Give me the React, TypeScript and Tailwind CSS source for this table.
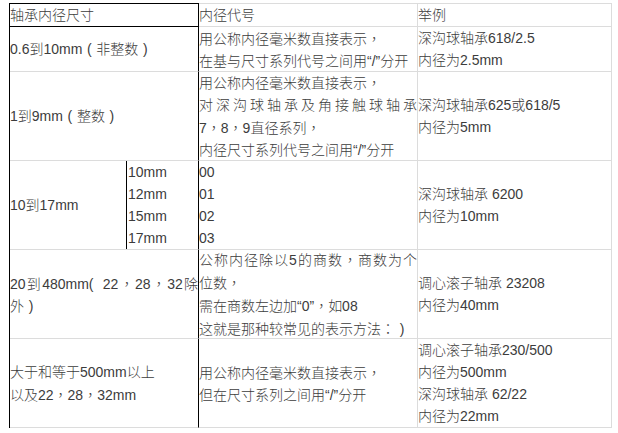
import React from "react";

const PUNCT = "，：";
const PAREN: Record<string, string> = { "（": "(", "）": ")" };

function T({ s }: { s: string }) {
  const parts: React.ReactNode[] = [];
  let buf = "";
  let k = 0;
  for (const ch of s) {
    if (PUNCT.includes(ch)) {
      if (buf) parts.push(buf);
      buf = "";
      parts.push(
        <span key={k++} className="font-['Noto_Sans_CJK_TC',sans-serif]">
          {ch}
        </span>
      );
    } else if (PAREN[ch]) {
      if (buf) parts.push(buf);
      buf = "";
      parts.push(
        <span key={k++} className="inline-block w-[14px] text-center">
          {PAREN[ch]}
        </span>
      );
    } else buf += ch;
  }
  if (buf) parts.push(buf);
  return <>{parts}</>;
}

const L = ({ s, j, nw }: { s: string; j?: boolean; nw?: boolean }) => (
  <div className={(j ? "text-justify [text-align-last:justify] " : "") + (nw ? "whitespace-nowrap" : "")}>
    <T s={s} />
  </div>
);

export default function App() {
  const c1 = "border-r border-b border-r-black border-b-[#dcdcdc] flex flex-col justify-center";
  const c2 = "border-r border-b border-[#dcdcdc] flex flex-col justify-center";
  const c3 = "border-r border-b border-[#dcdcdc] flex flex-col justify-center";
  return (
    <div className="w-[618px] h-[433px] bg-white pt-[3px] pl-[9px] text-[14px] leading-[22px] font-light text-[#3c3c3c] font-['Liberation_Sans','Noto_Sans_CJK_SC',sans-serif]">
      <div className="grid grid-cols-[189px_219px_194px] grid-rows-[24px_45px_89px_89px_89px_89px] border-l border-black">
        {/* header */}
        <div className="border border-l-0 border-black flex flex-col justify-center">轴承内径尺寸</div>
        <div className="border-t border-r border-b border-[#dcdcdc] flex flex-col justify-center">内径代号</div>
        <div className="border-t border-r border-b border-[#dcdcdc] flex flex-col justify-center">举例</div>

        {/* row 1 */}
        <div className={c1}>
          <L s="0.6到10mm（非整数）" />
        </div>
        <div className={c2}>
          <L s="用公称内径毫米数直接表示，" />
          <L s="在基与尺寸系列代号之间用“/”分开" nw />
        </div>
        <div className={c3}>
          <div>深沟球轴承618/2.5</div>
          <div>内径为2.5mm</div>
        </div>

        {/* row 2 */}
        <div className={c1}>
          <L s="1到9mm（整数）" />
        </div>
        <div className={c2}>
          <L s="用公称内径毫米数直接表示，" />
          <L s="对深沟球轴承及角接触球轴承" j />
          <L s="7，8，9直径系列，" />
          <L s="内径尺寸系列代号之间用“/”分开" nw />
        </div>
        <div className={c3}>
          <div>深沟球轴承625或618/5</div>
          <div>内径为5mm</div>
        </div>

        {/* row 3 */}
        <div className="border-r border-b border-r-black border-b-[#dcdcdc] flex">
          <div className="w-[117px] border-r border-black flex items-center">10到17mm</div>
          <div className="flex-1 flex flex-col justify-center pl-px">
            <div>10mm</div>
            <div>12mm</div>
            <div>15mm</div>
            <div>17mm</div>
          </div>
        </div>
        <div className={c2}>
          <div>00</div>
          <div>01</div>
          <div>02</div>
          <div>03</div>
        </div>
        <div className={c3}>
          <div>深沟球轴承 6200</div>
          <div>内径为10mm</div>
        </div>

        {/* row 4 */}
        <div className={c1}>
          <L s="20到480mm（22，28，32除" j />
          <L s="外）" />
        </div>
        <div className={c2}>
          <L s="公称内径除以5的商数，商数为个" j />
          <L s="位数，" />
          <L s="需在商数左边加“0”，如08" />
          <L s="这就是那种较常见的表示方法：）" />
        </div>
        <div className={c3}>
          <div>调心滚子轴承 23208</div>
          <div>内径为40mm</div>
        </div>

        {/* row 5 */}
        <div className={c1}>
          <div>大于和等于500mm以上</div>
          <L s="以及22，28，32mm" />
        </div>
        <div className={c2}>
          <L s="用公称内径毫米数直接表示，" />
          <div>但在尺寸系列之间用“/”分开</div>
        </div>
        <div className={c3}>
          <div>调心滚子轴承230/500</div>
          <div>内径为500mm</div>
          <div>深沟球轴承 62/22</div>
          <div>内径为22mm</div>
        </div>
      </div>
    </div>
  );
}
